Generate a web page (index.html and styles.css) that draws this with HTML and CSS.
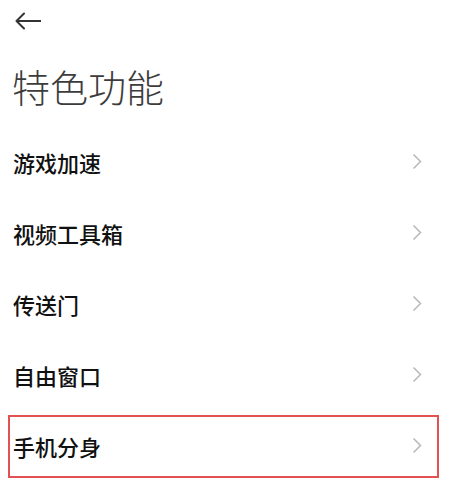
FILE: index.html
```html
<!DOCTYPE html>
<html lang="zh-CN">

<head>
    <meta charset="UTF-8">
    <meta name="viewport" content="width=device-width, initial-scale=1.0">
    <title>特色功能</title>
    <link rel="stylesheet" href="styles.css">
</head>

<body>
    <div id="container">
        <div class="header">
            <button class="btn-back">
                <svg width="26" height="18" viewBox="0 0 26 18">
                    <path d="M9 1.5 L1.5 9 L9 16.5 M1.5 9 H26" fill="none" stroke="#333" stroke-width="2" stroke-linecap="round" stroke-linejoin="round" />
                </svg>
            </button>
        </div>
        <div class="title">特色功能</div>
        <div class="list">
            <div class="list-item">
                <span class="item-text">游戏加速</span>
                <svg class="chevron" width="10" height="17" viewBox="0 0 10 17">
                    <polyline points="1.5,1.5 8.5,8.5 1.5,15.5" fill="none" stroke="#b8b8b8" stroke-width="1.5" />
                </svg>
            </div>
            <div class="list-item">
                <span class="item-text">视频工具箱</span>
                <svg class="chevron" width="10" height="17" viewBox="0 0 10 17">
                    <polyline points="1.5,1.5 8.5,8.5 1.5,15.5" fill="none" stroke="#b8b8b8" stroke-width="1.5" />
                </svg>
            </div>
            <div class="list-item">
                <span class="item-text">传送门</span>
                <svg class="chevron" width="10" height="17" viewBox="0 0 10 17">
                    <polyline points="1.5,1.5 8.5,8.5 1.5,15.5" fill="none" stroke="#b8b8b8" stroke-width="1.5" />
                </svg>
            </div>
            <div class="list-item">
                <span class="item-text">自由窗口</span>
                <svg class="chevron" width="10" height="17" viewBox="0 0 10 17">
                    <polyline points="1.5,1.5 8.5,8.5 1.5,15.5" fill="none" stroke="#b8b8b8" stroke-width="1.5" />
                </svg>
            </div>
            <div class="list-item highlight">
                <span class="item-text">手机分身</span>
                <svg class="chevron" width="10" height="17" viewBox="0 0 10 17">
                    <polyline points="1.5,1.5 8.5,8.5 1.5,15.5" fill="none" stroke="#b8b8b8" stroke-width="1.5" />
                </svg>
            </div>
        </div>
    </div>
</body>

</html>
```

FILE: styles.css
```css
* {
    padding: 0;
    margin: 0;
    box-sizing: border-box;
}

body {
    background-color: #fff;
    font-family: "Noto Sans CJK SC", "Noto Sans", sans-serif;
}

#container {
    width: 464px;
    height: 484px;
    overflow: hidden;
}

.header {
    height: 42px;
    padding-top: 12px;
    padding-left: 15px;
    display: flex;
    align-items: flex-start;
}

.btn-back {
    border: none;
    background: none;
    display: flex;
    cursor: pointer;
}

.title {
    padding-top: 4px;
    padding-left: 12px;
    font-size: 38px;
    font-weight: 300;
    line-height: 80px;
    color: #3c3c3c;
}

.list {
    display: flex;
    flex-direction: column;
}

.list-item {
    position: relative;
    height: 71px;
    padding: 0 42px 0 13px;
    display: flex;
    align-items: center;
    justify-content: space-between;
}

.item-text {
    font-size: 22px;
    font-weight: 500;
    color: #111;
}

.highlight::after {
    content: "";
    position: absolute;
    left: 8px;
    right: 25px;
    top: 5px;
    bottom: 3px;
    border: 2px solid #e25252;
}
```
